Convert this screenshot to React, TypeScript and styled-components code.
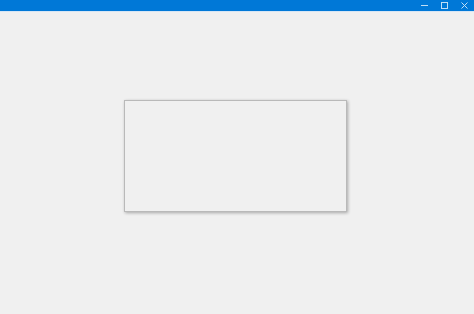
import React from "react";
import styled, { createGlobalStyle } from "styled-components";

const Global = createGlobalStyle`
  html, body {
    margin: 0;
    padding: 0;
    background: #f0f0f0;
    font-family: "Segoe UI", "Noto Sans", sans-serif;
  }
`;

const Window = styled.div`
  width: 474px;
  height: 314px;
  display: flex;
  flex-direction: column;
  background: #f0f0f0;
  overflow: hidden;
`;

const TitleBar = styled.div`
  height: 11px;
  background: #0078d7;
  display: flex;
  justify-content: flex-end;
  align-items: center;
  border-bottom: 1px solid #d6e6f5;
`;

const CaptionButton = styled.div`
  width: 20px;
  height: 11px;
  display: flex;
  align-items: center;
  justify-content: center;
  opacity: 0.75;
`;

const Client = styled.div`
  flex: 1;
  display: flex;
  align-items: flex-start;
  justify-content: center;
  padding-top: 88px;
  padding-right: 3px;
`;

const Panel = styled.div`
  width: 221px;
  height: 110px;
  background: #f0f0f0;
  border: 1px solid #b9b9b9;
  box-shadow: 1px 1px 3px rgba(0, 0, 0, 0.3);
`;

export default function App() {
  return (
    <Window>
      <Global />
      <TitleBar>
        <CaptionButton>
          <svg width="7" height="7" viewBox="0 0 7 7">
            <line x1="0" y1="3.5" x2="7" y2="3.5" stroke="#ffffff" strokeWidth="1" />
          </svg>
        </CaptionButton>
        <CaptionButton>
          <svg width="7" height="7" viewBox="0 0 7 7">
            <rect x="0.5" y="0.5" width="6" height="6" fill="none" stroke="#ffffff" strokeWidth="1" />
          </svg>
        </CaptionButton>
        <CaptionButton>
          <svg width="7" height="7" viewBox="0 0 7 7">
            <path d="M0.5 0.5 L6.5 6.5 M6.5 0.5 L0.5 6.5" stroke="#ffffff" strokeWidth="1" />
          </svg>
        </CaptionButton>
      </TitleBar>
      <Client>
        <Panel />
      </Client>
    </Window>
  );
}
